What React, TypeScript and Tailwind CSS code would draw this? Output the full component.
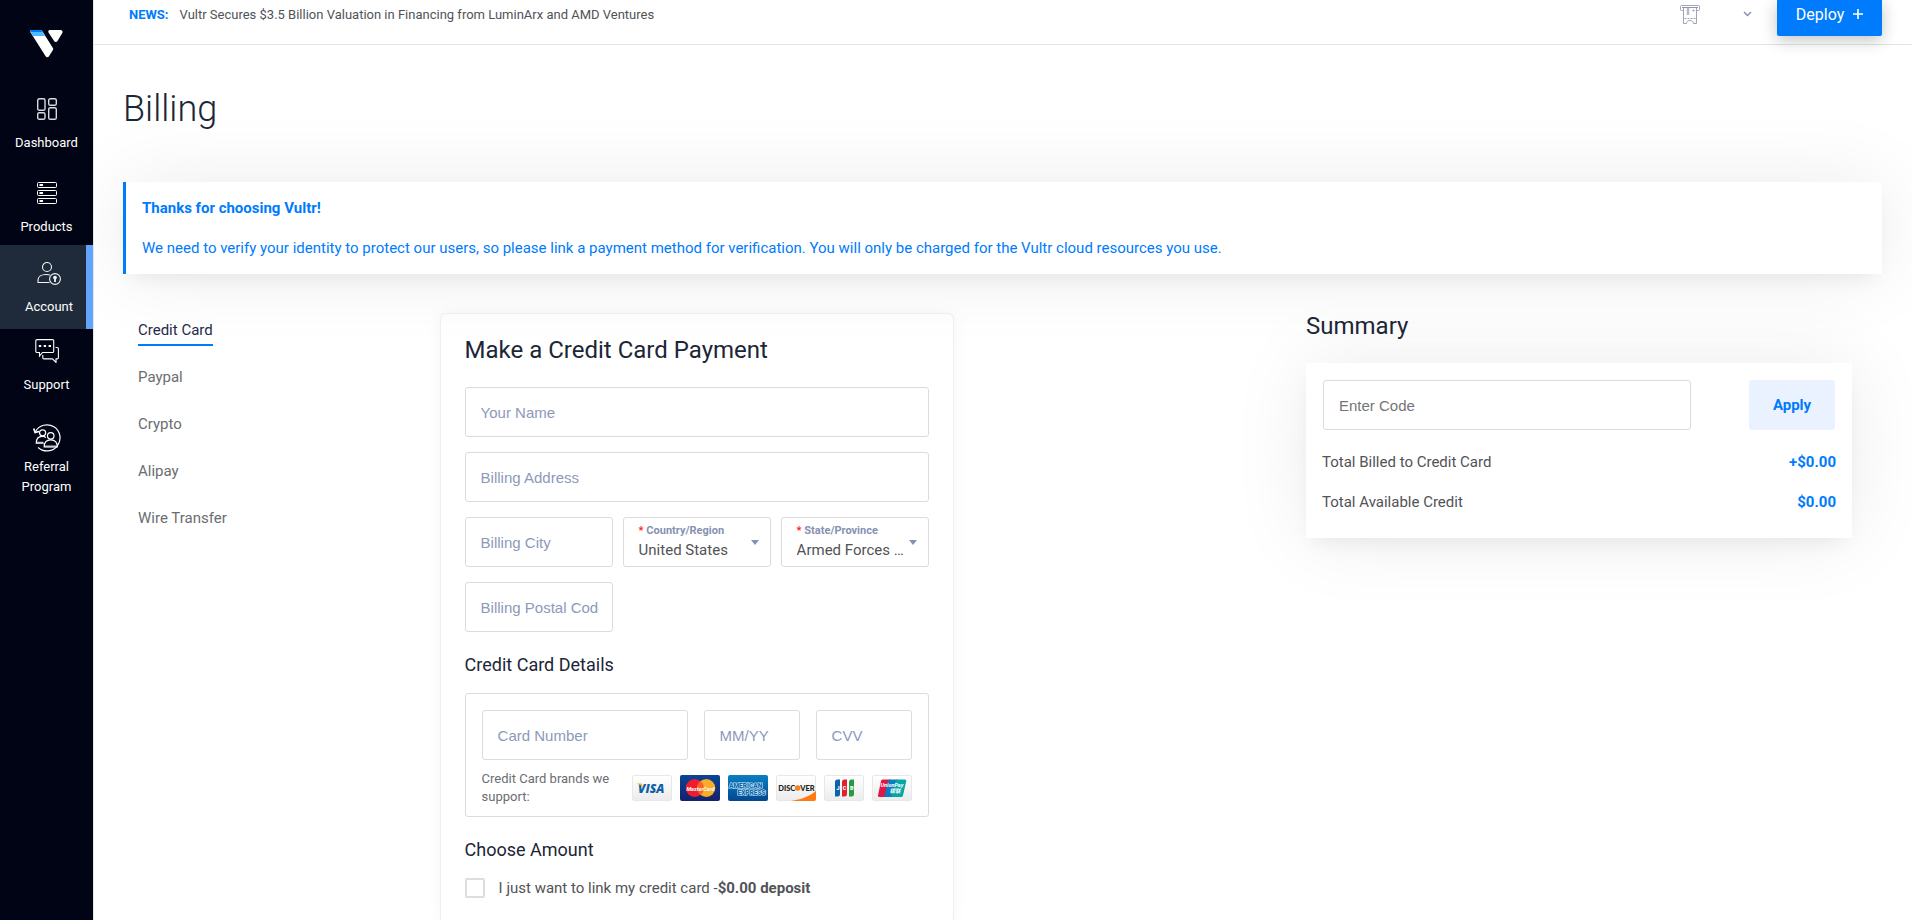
import type { ReactNode } from 'react';

const inputClass =
  'h-[50px] w-full min-w-0 rounded-[3px] border border-[#dcdcdf] bg-white pr-[13px] pl-[15px] text-[15px] font-["Liberation_Sans",sans-serif] text-[#515357] placeholder:text-[#8d99b9] placeholder:opacity-100 focus:outline-none';

function Logo() {
  return (
    <svg width="33" height="28" viewBox="0 0 33 28" aria-label="Vultr">
      <path d="M1.2 0H10.5a2 2 0 0 1 1.7.9l10.7 17.1a2 2 0 0 1 0 2.1L19 26.3a2 2 0 0 1-3.4 0L.6 2.4C-.2 1.2 .2 0 1.2 0Z" fill="#fff" />
      <path d="M1.2 0H10.5a2 2 0 0 1 1.7 .9L15.2 6H2.9L.6 2.4C-.2 1.2 .2 0 1.2 0Z" fill="#51b9ff" />
      <path d="M1.2 0H10.5a2 2 0 0 1 1.7 .9L12.9 2H.5C-.1 1 .3 0 1.2 0Z" fill="#007bfc" />
      <path d="M20 0H30.5a2 2 0 0 1 1.8 3L27.5 11a2 2 0 0 1-3.4 0L18.5 2.4C17.9 1.2 18.6 0 20 0Z" fill="#fff" />
    </svg>
  );
}

function DashboardIcon() {
  return (
    <svg width="20" height="22" viewBox="0 0 20 22" fill="none" stroke="#d8dae0" strokeWidth="1.4">
      <rect x=".7" y=".7" width="7.3" height="11.6" rx="1.6" />
      <rect x=".7" y="14.7" width="7.3" height="6.6" rx="1.6" />
      <rect x="11.7" y=".7" width="7.6" height="6.6" rx="1.6" />
      <rect x="11.7" y="9.7" width="7.6" height="11.6" rx="1.6" />
    </svg>
  );
}

function ProductsIcon() {
  return (
    <svg width="20" height="22" viewBox="0 0 20 22" fill="none" stroke="#fff">
      <rect x=".5" y=".5" width="19" height="5" rx="1" />
      <rect x=".5" y="8.5" width="19" height="5" rx="1" />
      <rect x=".5" y="16.5" width="19" height="5" rx="1" />
      <path d="M2.5 3H6M2.5 11H6M2.5 19H6" strokeWidth="2" />
    </svg>
  );
}

function AccountIcon() {
  return (
    <svg width="24" height="23" viewBox="0 0 24 23" fill="none" stroke="#f3f4f6" strokeWidth="1.1">
      <circle cx="10" cy="5" r="4.5" />
      <path d="M12.5 20.5H1V18c0-3.500 3.500-5.500 8-5.500 1.500 0 2.800.2 4 .6" />
      <circle cx="18" cy="17" r="5.4" />
      <circle cx="18" cy="15.5" r="1.3" fill="#fff" />
      <path d="M18 16v4" strokeWidth="1.8" />
    </svg>
  );
}

function SupportIcon() {
  return (
    <svg width="24" height="24" viewBox="0 0 24 24" fill="none" stroke="#fff" strokeWidth="1.1">
      <path d="M2 .6h15.500a1.200 1.200 0 0 1 1.200 1.200v10.500a1.200 1.200 0 0 1-1.200 1.200H7.500L4.500 17v-3.500H2a1.200 1.200 0 0 1-1.200-1.200V1.800A1.200 1.200 0 0 1 2 .6Z" />
      <path d="M20.500 8.500h1.700a1.200 1.200 0 0 1 1.200 1.200v9a1.200 1.200 0 0 1-1.200 1.200H21v3.500l-3.500-3.500H9a1.200 1.200 0 0 1-1.200-1.200V16" />
      <path d="M3.800 7h2.400M8.700 7h2.400M13.600 7H16" strokeWidth="2.2" />
    </svg>
  );
}

function ReferralIcon() {
  return (
    <svg width="30" height="30" viewBox="0 0 30 30" fill="none" stroke="#fff" strokeWidth="1.3">
      <path d="M2.500 8.500A14 14 0 1 1 5.500 25.200" />
      <path d="M.8 4.800 2.200 9.200 6.500 8" strokeWidth="1.8" />
      <circle cx="10.3" cy="9.5" r="3.3" />
      <path d="M11.500 20.500H3.500c0-4.500 2-7.200 6.500-7.200 1.500 0 2.800.4 3.800 1.200" />
      <circle cx="19" cy="12.7" r="3.5" />
      <path d="M12 24.500c0-5 2.500-7.500 7-7.500s7 2.500 7 7.500Z" />
      <path d="M4.500 20h6.500M13 24h12" stroke="#c9cbd0" strokeWidth="2" />
    </svg>
  );
}

function TicketIcon() {
  return (
    <svg width="20" height="19" viewBox="0 0 20 19" fill="none" stroke="#9ea4bb">
      <path d="M3 5.500H1.500a1 1 0 0 1-1-1v-3a1 1 0 0 1 1-1h17a1 1 0 0 1 1 1v3a1 1 0 0 1-1 1H17" />
      <path d="M2 2.500h16" stroke="#8f96ae" />
      <path d="M3.500 3v15.500h3c0-2 1.500-3 3.500-3s3.500 1 3.500 3h3V3" />
      <path d="M8 3v7" stroke="#b4b8c8" strokeWidth="2.5" />
      <path d="M4.500 13.500h11" strokeDasharray="2 1" />
      <circle cx="13.5" cy="5.5" r=".6" fill="#6f768f" />
    </svg>
  );
}

type NavItemProps = {
  label: string;
  icon: ReactNode;
  className: string;
  active?: boolean;
};

function NavItem({ label, icon, className, active }: NavItemProps) {
  return (
    <a
      href="#"
      aria-current={active ? 'page' : undefined}
      className={`flex h-[84px] flex-col items-center text-center text-[13px] leading-5 text-white ${className}`}
    >
      {icon}
      {label}
    </a>
  );
}

type SelectProps = {
  id: string;
  label: string;
  value: string;
};

function SelectField({ id, label, value }: SelectProps) {
  return (
    <div className="relative h-[50px] min-w-0 rounded-[3px] border border-[#dcdcdf] bg-white pt-[5px]">
      <label htmlFor={id} className="block pl-[15px] text-[11px] leading-4 font-bold text-[#8592b3]">
        <span className="text-[#ff1a1a]">*</span> {label}
      </label>
      <select
        id={id}
        className="block h-[22px] w-full cursor-pointer appearance-none truncate bg-transparent pr-5 pl-[15px] text-[15px] leading-[22px] text-[#515357] focus:outline-none"
      >
        <option>{value}</option>
      </select>
      <svg className="pointer-events-none absolute top-[22px] right-[11px]" width="8" height="5" viewBox="0 0 8 5">
        <path d="M0 0h8L4 5Z" fill="#8592b3" />
      </svg>
    </div>
  );
}

function Brand({ name, children }: { name: string; children: ReactNode }) {
  return (
    <svg width="40" height="26" viewBox="0 0 40 26" role="img" aria-label={name}>
      <defs>
        <linearGradient id="paper" x2="0" y2="1">
          <stop offset="0" stopColor="#fff" />
          <stop offset="1" stopColor="#ececec" />
        </linearGradient>
        <linearGradient id="amex" x2="0" y2="1">
          <stop offset="0" stopColor="#0a7fc2" />
          <stop offset="1" stopColor="#03478f" />
        </linearGradient>
        <linearGradient id="navy" x2="0" y2="1">
          <stop offset="0" stopColor="#0a4595" />
          <stop offset="1" stopColor="#16216a" />
        </linearGradient>
      </defs>
      <rect x=".5" y=".5" width="39" height="25" rx="1.5" fill="url(#paper)" stroke="#e8e8e8" />
      {children}
    </svg>
  );
}

function CardBrands() {
  return (
    <div className="flex shrink-0 gap-2">
      <Brand name="Visa">
        <text x="6" y="17.5" fontFamily="Open Sans" fontSize="12" fontWeight="800" fontStyle="italic" fill="#0f5fa8">VISA</text>
        <path d="M5 8.500h4.500l2 5C10 11 8 9.500 5 9Z" fill="#f7b219" />
      </Brand>
      <Brand name="MasterCard">
        <rect width="40" height="26" rx="2" fill="url(#navy)" />
        <circle cx="14.7" cy="13" r="9" fill="#ee1c2e" />
        <circle cx="26.3" cy="13" r="9" fill="#fbac28" />
        <path d="M20.500 6a9 9 0 0 1 0 14 9 9 0 0 1 0-14Z" fill="#f26522" />
        <text x="20.5" y="15.5" textAnchor="middle" fontFamily="Roboto" fontSize="5.5" fontWeight="700" fontStyle="italic" fill="#fff">MasterCard</text>
      </Brand>
      <Brand name="American Express">
        <rect width="40" height="26" rx="2" fill="url(#amex)" />
        <g fontFamily="Roboto" fontSize="6.5" fontWeight="900" fill="#0869ae" stroke="#cfe6f7" strokeWidth="1.2" paintOrder="stroke">
          <text x="1" y="13">AMERICAN</text>
          <text x="9.5" y="19.5">EXPRESS</text>
        </g>
      </Brand>
      <Brand name="Discover">
        <path d="M15 26C25 24.500 33 21.500 40 16v8a2 2 0 0 1-2 2Z" fill="#ff7a14" />
        <text x="2.2" y="15.8" fontFamily="Lato" fontSize="7.5" fontWeight="900" fill="#222">DISC</text>
        <circle cx="21.7" cy="13" r="2.8" fill="#f58220" />
        <text x="24.3" y="15.8" fontFamily="Lato" fontSize="7.5" fontWeight="900" fill="#222">VER</text>
      </Brand>
      <Brand name="JCB">
        <path d="M13.500 4.500H16V19a2.500 2.500 0 0 1-2.500 2.500H11V7a2.500 2.500 0 0 1 2.500-2.500Z" fill="#0b63ae" />
        <path d="M20.500 4.500H23V19a2.500 2.500 0 0 1-2.500 2.500H18V7a2.500 2.500 0 0 1 2.500-2.500Z" fill="#e21f2f" />
        <path d="M27.500 4.500H30V19a2.500 2.500 0 0 1-2.500 2.500H25V7a2.500 2.500 0 0 1 2.500-2.500Z" fill="#249c42" />
        <g fontFamily="Roboto" fontSize="5.5" fontWeight="900" fill="#fff">
          <text x="12.5" y="15">J</text>
          <text x="18.8" y="15">C</text>
          <text x="26" y="15">B</text>
        </g>
      </Brand>
      <Brand name="UnionPay">
        <path d="M10.500 4.500h8L14.500 22H7.500a1.500 1.500 0 0 1-1.400-2L9 6a2 2 0 0 1 1.500-1.500Z" fill="#e21645" />
        <path d="M18 4.500h8L22 22h-8.500a1.500 1.500 0 0 1-1-2L16 6a2 2 0 0 1 2-1.500Z" fill="#0b7cc0" />
        <path d="M25.500 4.500H33a1.300 1.300 0 0 1 1.200 1.700L31 20.500a2 2 0 0 1-2 1.500h-8.500a1.500 1.500 0 0 1-1-2L23.500 6a2 2 0 0 1 2-1.500Z" fill="#05a6a5" />
        <g fill="#fff" fontWeight="700" fontSize="5.5" fontStyle="italic">
          <text x="8.5" y="12" fontFamily="Roboto">UnionPay</text>
          <text x="17.5" y="18" fontFamily="Noto Sans CJK SC">银联</text>
        </g>
      </Brand>
    </div>
  );
}

const methods = ['Paypal', 'Crypto', 'Alipay', 'Wire Transfer'];

export default function App() {
  return (
    <div className="flex min-h-screen bg-white font-[Roboto,sans-serif] text-[15px] text-[#515357]">
      <aside className="w-[93px] shrink-0 bg-[#000414]">
        <a href="#" className="flex h-[77px] justify-center pt-[30px]">
          <Logo />
        </a>
        <nav>
          <NavItem label="Dashboard" icon={<DashboardIcon />} className="gap-[13px] pt-[21px]" />
          <NavItem label="Products" icon={<ProductsIcon />} className="gap-[13px] pt-[21px]" />
          <NavItem
            label="Account"
            icon={<AccountIcon />}
            className="gap-3 border-r-[7px] border-[#62a3fb] bg-[#1f2a3a] pt-[17px] pl-3"
            active
          />
          <NavItem label="Support" icon={<SupportIcon />} className="gap-3 pt-[10px]" />
          <NavItem label="Referral Program" icon={<ReferralIcon />} className="gap-[5px] px-2 pt-[11px]" />
        </nav>
      </aside>

      <main className="flex min-w-0 flex-1 flex-col overflow-x-clip border-l border-[#e4e6ea]">
        <header className="flex h-[45px] shrink-0 items-start border-b border-[#e2e3e5] pr-[30px] pl-[35px] text-[13px]">
          <p className="pt-[5px] leading-5">
            <strong className="mr-[11px] font-bold text-[#007bfc]">NEWS:</strong>
            Vultr Secures $3.5 Billion Valuation in Financing from LuminArx and AMD Ventures
          </p>
          <div className="ml-auto flex items-start">
            <button aria-label="Billing credit" className="mt-[5px] mr-[43px]">
              <TicketIcon />
            </button>
            <button aria-label="Account menu" className="mt-[11px] mr-[25px]">
              <svg width="9" height="6" viewBox="0 0 9 6" fill="none" stroke="#8592b3" strokeWidth="1.5">
                <path d="m1 1 3.500 3.500L8 1" />
              </svg>
            </button>
            <button className="flex h-9 w-[105px] justify-center gap-[9px] rounded-b-[2px] bg-[#007bfc] pt-[5px] text-base leading-5 text-white shadow-[0_4px_16px_rgba(0,20,20,0.25)]">
              Deploy
              <svg className="mt-1" width="10" height="10" viewBox="0 0 10 10" stroke="#fff" strokeWidth="1.6">
                <path d="M5 0v10M0 5h10" />
              </svg>
            </button>
          </div>
        </header>

        <div className="flex flex-1 flex-col pr-[30px] pl-[29px]">
          <h1 className="mt-11 text-4xl font-light text-[#1b2637]">Billing</h1>

          <section className="mt-[53px] space-y-5 border-l-[3px] border-[#007bfc] bg-white p-4 leading-5 text-[#007bfc] shadow-[0_10px_20px_-8px_rgba(10,30,30,0.08),0_0_80px_rgba(0,0,0,0.08)]">
            <p className="font-bold">Thanks for choosing Vultr!</p>
            <p>
              We need to verify your identity to protect our users, so please link a payment method for verification. You
              will only be charged for the Vultr cloud resources you use.
            </p>
          </section>

          <div className="mt-[39px] flex flex-1">
            <nav className="flex w-[18%] shrink-0 flex-col items-start gap-[21px] pt-[7px] pl-[15px] leading-5 text-[#6b6d71]">
              <a href="#" className="border-b-2 border-[#007bfc] pb-1 text-[#1f2a4a]">Credit Card</a>
              {methods.map((method) => (
                <a key={method} href="#" className="pb-[6px]">{method}</a>
              ))}
            </nav>

            <form className="w-[514px] shrink-0 rounded-t-md border border-b-0 border-[#eeeeef] px-6 pt-5 pb-5 text-[#515357] shadow-[0_0_16px_rgba(0,0,0,0.04)]">
              <h2 className="text-2xl text-[#1b2637]">Make a Credit Card Payment</h2>
              <div className="mt-[21px] space-y-[15px]">
                <input aria-label="Your Name" placeholder="Your Name" className={inputClass} />
                <input aria-label="Billing Address" placeholder="Billing Address" className={inputClass} />
                <div className="grid grid-cols-3 gap-x-[10px] gap-y-[15px]">
                  <input aria-label="Billing City" placeholder="Billing City" className={inputClass} />
                  <SelectField id="country" label="Country/Region" value="United States" />
                  <SelectField id="state" label="State/Province" value="Armed Forces Americas" />
                  <input aria-label="Billing Postal Code" placeholder="Billing Postal Code" className={inputClass} />
                </div>
              </div>

              <h3 className="mt-[21px] text-lg leading-6 text-[#1b2637]">Credit Card Details</h3>
              <div className="mt-4 rounded-[3px] border border-[#dcdcdf] px-4 pt-4 pb-[10px]">
                <div className="flex gap-4">
                  <div className="min-w-0 flex-1">
                    <input aria-label="Card Number" placeholder="Card Number" className={inputClass} />
                  </div>
                  <div className="w-24">
                    <input aria-label="Expiry date" placeholder="MM/YY" className={inputClass} />
                  </div>
                  <div className="w-24">
                    <input aria-label="CVV" placeholder="CVV" className={inputClass} />
                  </div>
                </div>
                <div className="mt-[10px] flex items-center justify-between">
                  <p className="w-[134px] text-[13px] leading-[18px] text-[#6b6d71]">Credit Card brands we support:</p>
                  <CardBrands />
                </div>
              </div>

              <h3 className="mt-[21px] text-lg leading-6 text-[#1b2637]">Choose Amount</h3>
              <label className="mt-4 flex items-center gap-[14px] leading-5">
                <input type="checkbox" className="size-5 appearance-none rounded-[2px] border-2 border-[#dcdde0] bg-white" />
                <span>
                  I just want to link my credit card -<strong className="font-bold">$0.00 deposit</strong>
                </span>
              </label>
            </form>

            <section className="mr-[30px] ml-auto w-[546px]">
              <h2 className="pt-px text-2xl leading-6 text-[#1b2637]">Summary</h2>
              <div className="mt-[25px] bg-white px-4 pt-[17px] pb-[26px] shadow-[0_10px_20px_-8px_rgba(10,30,30,0.08),0_0_80px_rgba(0,0,0,0.08)]">
                <div className="flex justify-between px-px">
                  <input
                    aria-label="Enter Code"
                    placeholder="Enter Code"
                    className="h-[50px] w-[368px] rounded-[3px] border border-[#dcdcdf] px-[15px] font-['Liberation_Sans',sans-serif] placeholder:text-[#757575] focus:outline-none"
                  />
                  <button className="h-[50px] w-[86px] rounded-[3px] bg-[#ebf2ff] font-bold text-[#007bfc]">Apply</button>
                </div>
                <dl className="mt-[22px] space-y-5 leading-5">
                  <div className="flex justify-between">
                    <dt>Total Billed to Credit Card</dt>
                    <dd className="font-bold text-[#007bfc]">+$0.00</dd>
                  </div>
                  <div className="flex justify-between">
                    <dt>Total Available Credit</dt>
                    <dd className="font-bold text-[#007bfc]">$0.00</dd>
                  </div>
                </dl>
              </div>
            </section>
          </div>
        </div>
      </main>
    </div>
  );
}
